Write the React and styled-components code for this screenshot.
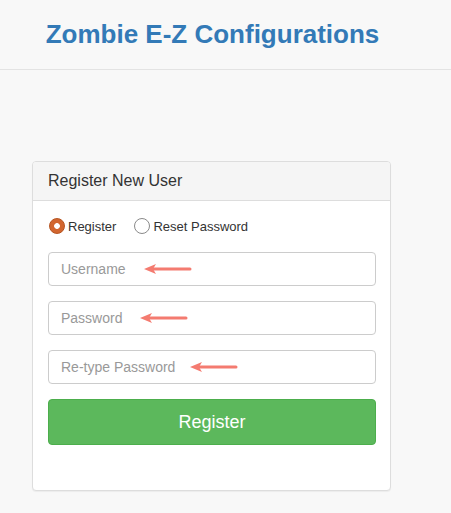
import React from "react";
import styled, { createGlobalStyle } from "styled-components";

const Global = createGlobalStyle`
  html, body { margin: 0; padding: 0; background: #f8f8f8; }
  body { font-family: "Liberation Sans", Arial, sans-serif; color: #333; font-size: 14px; }
`;

const Header = styled.header`
  height: 70px;
  border-bottom: 1px solid #e3e3e3;
  display: flex;
  align-items: center;
  justify-content: center;
  box-sizing: border-box;
`;

const Title = styled.h1`
  margin: 0;
  font-size: 26px;
  font-weight: bold;
  color: #337ab7;
  transform: translateX(-13px);
`;

const Main = styled.main`
  padding: 91px 0 20px 32px;
`;

const Panel = styled.section`
  width: 359px;
  background: #fff;
  border: 1px solid #ddd;
  border-radius: 4px;
  box-shadow: 0 1px 1px rgba(0,0,0,0.05);
  box-sizing: border-box;
`;

const PanelHeading = styled.div`
  background: #f5f5f5;
  border-bottom: 1px solid #ddd;
  border-radius: 3px 3px 0 0;
  height: 39px;
  box-sizing: border-box;
  padding: 0 15px;
  display: flex;
  align-items: center;
  font-size: 16px;
  color: #333;
`;

const PanelBody = styled.div`
  padding: 15px 15px 45px 15px;
  display: flex;
  flex-direction: column;
`;

const RadioRow = styled.div`
  display: flex;
  align-items: center;
  height: 20px;
  margin-bottom: 16px;
  font-size: 13px;
  padding-left: 1px;
`;

const RadioLabel = styled.label`
  display: flex;
  align-items: center;
  gap: 3px;
  margin-right: 18px;
`;

const RadioDot = styled.span`
  width: 16px;
  height: 16px;
  border-radius: 50%;
  box-sizing: border-box;
  display: inline-block;
  ${p => p.$checked ? `
    background: radial-gradient(circle, #fff 0 2.5px, #d2662f 3.2px);
    border: 1px solid #b6531f;
  ` : `
    background: #fff;
    border: 1px solid #8a8a8a;
  `}
`;

const Field = styled.div`
  position: relative;
  height: 34px;
  border: 1px solid #ccc;
  border-radius: 4px;
  box-sizing: border-box;
  width: 328px;
  margin-bottom: 15px;
  display: flex;
  align-items: center;
  padding: 0 12px;
  font-size: 14px;
  color: #999;
  background: #fff;
`;

const Arrow = styled.svg`
  position: absolute;
  top: 9px;
`;

const Button = styled.button`
  width: 328px;
  height: 46px;
  background: #5cb85c;
  border: 1px solid #4cae4c;
  border-radius: 4px;
  color: #fff;
  font-family: inherit;
  font-size: 18px;
`;

const ArrowIcon = ({ left }) => (
  <Arrow style={{ left }} width="52" height="14" viewBox="0 0 52 14">
    <line x1="10" y1="7" x2="48" y2="7" stroke="#f47b70" strokeWidth="3" strokeLinecap="round" />
    <path d="M2 7 L14 2 L11 7 L14 12 Z" fill="#f47b70" />
  </Arrow>
);

export default function App() {
  return (
    <>
      <Global />
      <Header>
        <Title>Zombie E-Z Configurations</Title>
      </Header>
      <Main>
        <Panel>
          <PanelHeading>Register New User</PanelHeading>
          <PanelBody>
            <RadioRow>
              <RadioLabel><RadioDot $checked />Register</RadioLabel>
              <RadioLabel><RadioDot />Reset Password</RadioLabel>
            </RadioRow>
            <Field>Username<ArrowIcon left="93px" /></Field>
            <Field>Password<ArrowIcon left="89px" /></Field>
            <Field>Re-type Password<ArrowIcon left="139px" /></Field>
            <Button>Register</Button>
          </PanelBody>
        </Panel>
      </Main>
    </>
  );
}
